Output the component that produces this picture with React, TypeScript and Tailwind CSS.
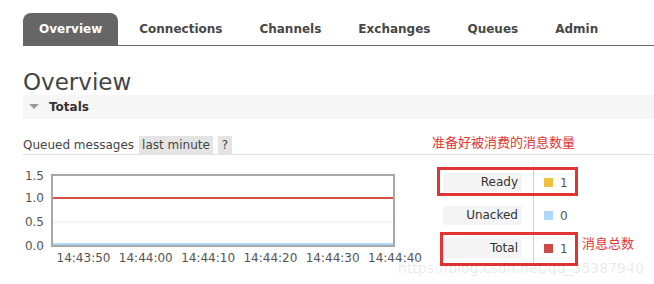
import React from "react";

const tabs = ["Overview", "Connections", "Channels", "Exchanges", "Queues", "Admin"];

const xLabels = [
  { x: 60.5, t: "14:43:50" },
  { x: 122.8, t: "14:44:00" },
  { x: 185.1, t: "14:44:10" },
  { x: 247.4, t: "14:44:20" },
  { x: 309.7, t: "14:44:30" },
  { x: 372, t: "14:44:40" },
];

const yLabels = [
  { y: 10, t: "1.5" },
  { y: 32, t: "1.0" },
  { y: 56, t: "0.5" },
  { y: 80, t: "0.0" },
];

const rows = [
  { label: "Ready", color: "bg-[#edc240]", value: "1" },
  { label: "Unacked", color: "bg-[#afd8f8]", value: "0" },
  { label: "Total", color: "bg-[#cb4b4b]", value: "1" },
];

function Chart() {
  return (
    <svg width="407" height="110" viewBox="0 0 407 110" className="block shrink-0">
      <line x1="30" y1="56" x2="370" y2="56" stroke="#ececec" strokeWidth="1" />
      <rect x="29" y="9" width="342" height="71" fill="none" stroke="#a8a8a8" strokeWidth="2" />
      <line x1="30" y1="32" x2="370" y2="32" stroke="#d4533e" strokeWidth="2" />
      <line x1="30" y1="78" x2="370" y2="78" stroke="#afd8f8" strokeWidth="2" />
      {yLabels.map((l) => (
        <text
          key={l.t}
          x="21"
          y={l.y}
          textAnchor="end"
          dominantBaseline="central"
          fontFamily="DejaVu Sans, sans-serif"
          fontSize="12"
          fill="#545454"
        >
          {l.t}
        </text>
      ))}
      {xLabels.map((l) => (
        <text
          key={l.t}
          x={l.x}
          y="92"
          textAnchor="middle"
          dominantBaseline="central"
          fontFamily="DejaVu Sans, sans-serif"
          fontSize="12"
          fill="#545454"
        >
          {l.t}
        </text>
      ))}
    </svg>
  );
}

export default function App() {
  return (
    <div className="relative w-[654px] h-[284px] overflow-hidden bg-white font-['DejaVu_Sans',sans-serif] text-[12px] text-[#444]">
      {/* Tabs */}
      <div className="ml-[23px] pt-[13px]">
        <div className="flex gap-[5px] border-b border-[#666]">
          {tabs.map((t, i) => (
            <div
              key={t}
              className={
                i === 0
                  ? "h-[32px] px-4 flex items-center rounded-t-[8px] bg-[#666] text-white font-bold text-[12px]"
                  : "h-[32px] px-4 flex items-center text-[#484848] font-bold text-[12px]"
              }
            >
              {t}
            </div>
          ))}
        </div>
      </div>

      {/* Main */}
      <div className="pl-[23px]">
        <h1 className="mt-[22px] h-[27px] leading-[28px] text-[23px] font-normal text-[#444]">Overview</h1>

        <div className="h-[24px] bg-[#f6f6f6] flex items-center">
          <svg width="10" height="6" viewBox="0 0 10 6" className="ml-[6px] block">
            <polygon points="0,0 10,0 5,5" fill="#999" />
          </svg>
          <span className="ml-[10px] font-bold text-[12px] text-[#333]">Totals</span>
        </div>

        <div className="mt-[17px] h-[19px] flex items-center border-b border-[#e2e2e2]">
          <span>Queued messages</span>
          <span className="ml-[5px] h-[18px] leading-[18px] px-[3px] bg-[#e4e4e4]">last minute</span>
          <span className="ml-[5px] h-[18px] leading-[18px] px-[4px] bg-[#e4e4e4]">?</span>
        </div>

        <div className="mt-[11px] flex">
          <Chart />
          <div className="ml-[7px] flex flex-col">
            {rows.map((r) => (
              <div key={r.label} className="flex h-[33px]">
                <div className="w-[96px] flex items-center">
                  <div className="ml-[6px] w-[79px] h-[19px] leading-[19px] pr-[4px] text-right bg-[#f4f4f4] rounded-[2px] text-[#333]">
                    {r.label}
                  </div>
                </div>
                <div className="border-l border-[#cfcfcf] pl-[10px] flex items-center">
                  <span className={`w-[9px] h-[9px] ${r.color}`} />
                  <span className="ml-[7px] text-[#555]">{r.value}</span>
                </div>
              </div>
            ))}
          </div>
        </div>
      </div>

      {/* Annotations */}
      <div className="absolute left-[432px] top-[134px] text-[13px] leading-[16px] text-[#e33535] font-['Noto_Sans_CJK_SC',sans-serif]">
        准备好被消费的消息数量
      </div>
      <div className="absolute left-[437px] top-[167px] w-[141px] h-[29px] border-[3px] border-[#e23434]" />
      <div className="absolute left-[440px] top-[232px] w-[138px] h-[34px] border-[3px] border-[#e23434]" />
      <div className="absolute left-[582px] top-[235px] text-[13px] leading-[16px] text-[#e33535] font-['Noto_Sans_CJK_SC',sans-serif]">
        消息总数
      </div>
      <div className="absolute left-[398px] top-[259px] text-[14px] leading-[18px] text-[#000]/10">
        https://blog.csdn.net/qq_35387940
      </div>
    </div>
  );
}
